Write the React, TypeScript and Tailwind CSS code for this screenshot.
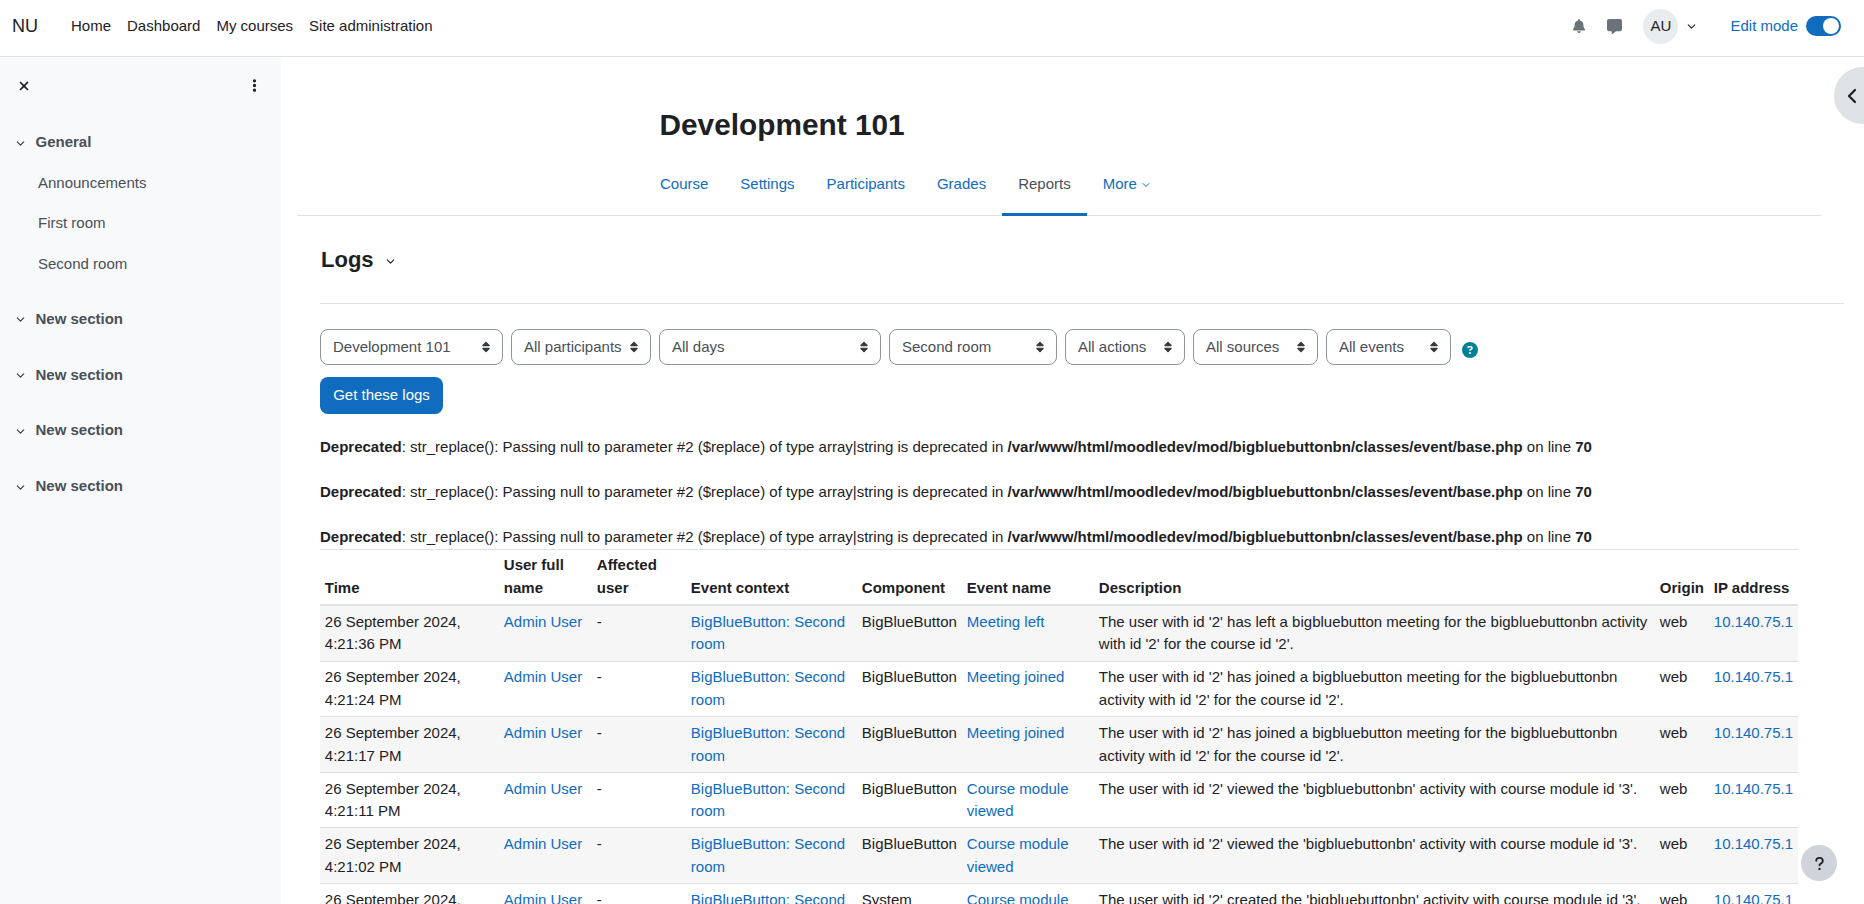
import { ChevronDown, ChevronLeft } from "lucide-react";
import { FaBell, FaCircleQuestion, FaEllipsisVertical, FaMessage, FaQuestion, FaSort, FaXmark } from "react-icons/fa6";

const NAV_LINKS = ["Home", "Dashboard", "My courses", "Site administration"];
const TABS = ["Course", "Settings", "Participants", "Grades", "Reports", "More"];
const ROOMS = ["Announcements", "First room", "Second room"];

const FILTERS = [
  { label: "Development 101", width: "w-[183px]" },
  { label: "All participants", width: "w-[140px]" },
  { label: "All days", width: "w-[222px]" },
  { label: "Second room", width: "w-[168px]" },
  { label: "All actions", width: "w-[120px]" },
  { label: "All sources", width: "w-[125px]" },
  { label: "All events", width: "w-[125px]" },
];

const COLUMNS = [
  { label: "Time", width: "w-[179px]" },
  { label: "User full name", width: "w-[93px]" },
  { label: "Affected user", width: "w-[94px]" },
  { label: "Event context", width: "w-[171px]" },
  { label: "Component", width: "w-[105px]" },
  { label: "Event name", width: "w-[132px]" },
  { label: "Description", width: "w-[561px]" },
  { label: "Origin", width: "w-[54px]" },
  { label: "IP address", width: "w-[89px]" },
];

const ROWS = [
  {
    time: "26 September 2024, 4:21:36 PM",
    component: "BigBlueButton",
    event: "Meeting left",
    description: "The user with id '2' has left a bigbluebutton meeting for the bigbluebuttonbn activity with id '2' for the course id '2'.",
  },
  {
    time: "26 September 2024, 4:21:24 PM",
    component: "BigBlueButton",
    event: "Meeting joined",
    description: "The user with id '2' has joined a bigbluebutton meeting for the bigbluebuttonbn activity with id '2' for the course id '2'.",
  },
  {
    time: "26 September 2024, 4:21:17 PM",
    component: "BigBlueButton",
    event: "Meeting joined",
    description: "The user with id '2' has joined a bigbluebutton meeting for the bigbluebuttonbn activity with id '2' for the course id '2'.",
  },
  {
    time: "26 September 2024, 4:21:11 PM",
    component: "BigBlueButton",
    event: "Course module viewed",
    description: "The user with id '2' viewed the 'bigbluebuttonbn' activity with course module id '3'.",
  },
  {
    time: "26 September 2024, 4:21:02 PM",
    component: "BigBlueButton",
    event: "Course module viewed",
    description: "The user with id '2' viewed the 'bigbluebuttonbn' activity with course module id '3'.",
  },
  {
    time: "26 September 2024, 4:20:50 PM",
    component: "System",
    event: "Course module created",
    description: "The user with id '2' created the 'bigbluebuttonbn' activity with course module id '3'.",
  },
];

function SectionRow({ label, className }: { label: string; className?: string }) {
  return (
    <div className={`flex h-10 items-center pl-[14px] font-bold text-[#495057] ${className ?? ""}`}>
      <ChevronDown size={13} strokeWidth={2} className="mr-[8.5px] mt-[2px] text-[#343a40]" />
      {label}
    </div>
  );
}

function DeprecatedNotice() {
  return (
    <p className="mb-[22.5px] last:mb-0">
      <b>Deprecated</b>: str_replace(): Passing null to parameter #2 ($replace) of type array|string is deprecated in{" "}
      <b>/var/www/html/moodledev/mod/bigbluebuttonbn/classes/event/base.php</b> on line <b>70</b>
    </p>
  );
}

export default function App() {
  return (
    <div className="relative flex h-screen flex-col overflow-hidden bg-white font-['Liberation_Sans',Arial,sans-serif] text-[15px] leading-[22.5px] text-[#1d2125]">
      <header className="flex h-[57px] shrink-0 items-center border-b border-[#dee2e6] pb-[4px] pr-[23px]">
        <span className="ml-[12px] text-[18px]">NU</span>
        <nav className="ml-[25px] flex">
          {NAV_LINKS.map((link) => (
            <a key={link} className="px-2">
              {link}
            </a>
          ))}
        </nav>
        <div className="ml-auto flex items-center">
          <span className="flex w-[35px] justify-center text-[#6a737b]">
            <FaBell size={14} />
          </span>
          <span className="flex w-[35px] justify-center text-[#6a737b]">
            <FaMessage size={15} />
          </span>
          <span className="ml-[11.5px] flex h-[35px] w-[35px] items-center justify-center rounded-full bg-[#e9ecef]">AU</span>
          <ChevronDown size={13} strokeWidth={2} className="ml-[7px] mt-[1px]" />
          <span className="ml-[32px] text-[#0f6cbf]">Edit mode</span>
          <span className="ml-[8px] flex h-5 w-[35px] items-center justify-end rounded-full bg-[#0f6cbf] pr-[2px]">
            <span className="h-4 w-4 rounded-full bg-white" />
          </span>
        </div>
      </header>

      <div className="flex min-h-0 flex-1">
        <aside className="w-[281px] shrink-0 bg-[#f8f9fa]">
          <div className="flex h-[57px] items-center justify-between pl-[17px] pr-[19px]">
            <FaXmark size={14} />
            <FaEllipsisVertical size={15} />
          </div>
          <SectionRow label="General" className="mt-[8px]" />
          {ROOMS.map((room) => (
            <div key={room} className="flex h-[40.5px] items-center pl-[38px] pt-[1px] text-[#495057]">
              {room}
            </div>
          ))}
          <SectionRow label="New section" className="mt-[15.4px]" />
          <SectionRow label="New section" className="mt-[16px]" />
          <SectionRow label="New section" className="mt-[15.4px]" />
          <SectionRow label="New section" className="mt-[16px]" />
        </aside>

        <main className="min-w-0 flex-1">
          <div className="ml-[16px] mr-[43px] border-b border-[#dee2e6] pl-[363px] pt-[51px]">
            <h1 className="-ml-[0.5px] text-[29.8px] font-bold leading-[34px]">Development 101</h1>
            <div className="-mb-px -ml-[16px] mt-[11px] flex">
              {TABS.map((tab) => (
                <a
                  key={tab}
                  className={
                    tab === "Reports"
                      ? "flex h-[63px] items-center border-b-[3px] border-[#0f6cbf] px-4 pt-[2px] text-[#495057]"
                      : "flex h-[63px] items-center border-b-[3px] border-transparent px-4 pt-[2px] text-[#0f6cbf]"
                  }
                >
                  {tab}
                  {tab === "More" && <ChevronDown size={12} strokeWidth={2} className="ml-[3px] mt-[2px]" />}
                </a>
              ))}
            </div>
          </div>

          <div className="pl-[39px] pr-[20px]">
            <div className="mt-[30px] flex h-7 items-center pl-[1px]">
              <h2 className="text-[22px] font-bold">Logs</h2>
              <ChevronDown size={13} strokeWidth={2} className="ml-[10px] mt-[3px]" />
            </div>
            <hr className="mt-[29px] border-[#dee2e6]" />

            <div className="mt-[25px] flex items-start gap-2">
              {FILTERS.map((filter) => (
                <div
                  key={filter.label}
                  className={`flex h-9 items-center justify-between rounded-lg border border-[#8f959e] pl-3 pr-[10px] text-[#495057] ${filter.width}`}
                >
                  {filter.label}
                  <FaSort size={12} className="text-[#343a40]" />
                </div>
              ))}
              <FaCircleQuestion size={16} className="ml-[3px] mt-[13px] text-[#008196]" />
            </div>

            <button type="button" className="mt-3 h-[37px] w-[123px] rounded-lg bg-[#0f6cbf] text-white">
              Get these logs
            </button>

            <div className="mt-[22px]">
              <DeprecatedNotice />
              <DeprecatedNotice />
              <DeprecatedNotice />
            </div>

            <table className="w-[1478px] table-fixed border-collapse">
              <colgroup>
                {COLUMNS.map((column) => (
                  <col key={column.label} className={column.width} />
                ))}
              </colgroup>
              <thead>
                <tr className="border-b-2 border-t border-[#dee2e6]">
                  {COLUMNS.map((column) => (
                    <th key={column.label} className="p-[4.8px] text-left align-bottom font-bold">
                      {column.label}
                    </th>
                  ))}
                </tr>
              </thead>
              <tbody>
                {ROWS.map((row) => (
                  <tr key={row.time} className="border-t border-[#dee2e6] align-top odd:bg-[#f6f6f6]">
                    <td className="p-[4.8px]">{row.time}</td>
                    <td className="p-[4.8px] text-[#0f6cbf]">Admin User</td>
                    <td className="p-[4.8px]">-</td>
                    <td className="p-[4.8px] text-[#0f6cbf]">BigBlueButton: Second room</td>
                    <td className="p-[4.8px]">{row.component}</td>
                    <td className="p-[4.8px] text-[#0f6cbf]">{row.event}</td>
                    <td className="p-[4.8px]">{row.description}</td>
                    <td className="p-[4.8px]">web</td>
                    <td className="p-[4.8px] text-[#0f6cbf]">10.140.75.1</td>
                  </tr>
                ))}
              </tbody>
            </table>
          </div>
        </main>
      </div>

      <button type="button" className="absolute right-0 top-[67px] flex h-[57px] w-[30px] items-center rounded-l-full bg-[#dee2e6] pl-[6px]">
        <ChevronLeft size={24} strokeWidth={2.25} />
      </button>
      <button type="button" className="absolute bottom-[23px] right-[27px] flex h-9 w-9 items-center justify-center rounded-full bg-[#ced4da]">
        <FaQuestion size={15} />
      </button>
    </div>
  );
}
